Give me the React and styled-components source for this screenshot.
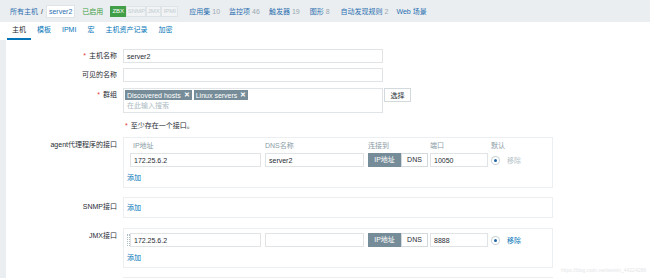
import React from 'react'
import styled, { createGlobalStyle } from 'styled-components'

const GlobalStyle = createGlobalStyle`
  html, body {
    margin: 0;
    padding: 0;
    background: #fff;
  }
  body {
    font-family: "Liberation Sans", Arial, "Noto Sans CJK SC", sans-serif;
    font-size: 7px;
    color: #1f2c33;
  }
  * { box-sizing: border-box; }
`

const Page = styled.div`
  position: relative;
  width: 650px;
  height: 278px;
  overflow: hidden;
`

// top header with breadcrumbs and host nav
const TopBar = styled.div`
  display: flex;
  align-items: center;
  height: 22px;
  padding-left: 10px;
  background: #ebeef0;
`
const Crumb = styled.span`
  color: #2a6fb0;
`
const Slash = styled.span`
  margin: 0 3px;
`
const CurrentCrumb = styled.span`
  color: #2a6fb0;
  background: #fff;
  border: 1px solid #dfe4e7;
  padding: 0 2px;
  line-height: 11px;
`
const Status = styled.span`
  color: #429e47;
  margin-left: 7px;
`
const Badges = styled.div`
  display: flex;
  margin-left: 7px;
`
const Badge = styled.span`
  width: ${p => p.$w}px;
  text-align: center;
  font-size: 6px;
  line-height: 9px;
  border: 1px solid ${p => (p.$on ? '#429e47' : '#dde3e6')};
  background: ${p => (p.$on ? '#429e47' : '#f1f3f4')};
  color: ${p => (p.$on ? '#fff' : '#c2ccd1')};
  overflow: hidden;
  white-space: nowrap;
`
const NavLink = styled.span`
  color: #2a6fb0;
  margin-left: ${p => p.$ml || 9}px;
`
const Count = styled.span`
  color: #9aa9b0;
  margin-left: 2px;
`

// tabs
const Tabs = styled.div`
  display: flex;
  gap: 1px;
  height: 18px;
  padding-left: 7px;
`
const Tab = styled.span`
  padding: 0 5px;
  line-height: 16px;
  border-bottom: 2px solid ${p => (p.$active ? '#0275b8' : 'transparent')};
  color: ${p => (p.$active ? '#1f2c33' : '#0275b8')};
`

// form
const Body = styled.div`
  display: flex;
`
const Strip = styled.div`
  width: 6px;
  flex-shrink: 0;
  background: #ebeef0;
  align-self: stretch;
`
const Form = styled.div`
  flex: 1;
  padding-top: 9px;
`
const Row = styled.div`
  display: flex;
  align-items: flex-start;
  margin-top: ${p => p.$mt || 0}px;
`
const Label = styled.div`
  width: 117px;
  flex-shrink: 0;
  padding-right: 6px;
  padding-top: ${p => p.$pt || 0}px;
  text-align: right;
  line-height: 14px;
`
const Req = styled.span`
  color: #e33734;
  margin-right: 3px;
`
const TextInput = styled.input`
  width: ${p => p.$w || 260}px;
  height: 14px;
  border: 1px solid #e0e4e6;
  padding: 0 3px;
  font: inherit;
  color: #1f2c33;
  outline: none;
  background: #fff;
`
const GroupRow = styled.div`
  display: flex;
  align-items: flex-start;
`
const MultiSelect = styled.div`
  width: 260px;
  height: 25px;
  border: 1px solid #e0e4e6;
  padding: 1px 1px 0;
`
const TagList = styled.div`
  display: flex;
  gap: 2px;
`
const Tag = styled.span`
  display: inline-flex;
  align-items: center;
  height: 10px;
  padding: 0 2px;
  background: #768d99;
  color: #fff;
`
const TagX = styled.span`
  margin-left: 3px;
  font-weight: bold;
`
const Placeholder = styled.div`
  color: #acbbc2;
  line-height: 10px;
  margin-top: 1px;
  padding-left: 2px;
`
const SelectButton = styled.button`
  margin-left: 1px;
  width: 27px;
  height: 14px;
  padding: 0;
  border: 1px solid #d3dadd;
  background: #fff;
  font: inherit;
  color: #1f2c33;
`
const Note = styled.div`
  line-height: 13px;
  padding-left: 2px;
`

// interface boxes
const IfaceBox = styled.div`
  width: 430px;
  border: 1px solid #eceff1;
  padding: 4px 3px 3px;
  min-height: ${p => p.$min || 0}px;
`
const IfaceHead = styled.div`
  display: flex;
  line-height: 8px;
  color: #8a9ca5;
  margin-bottom: 3px;
`
const IfaceLine = styled.div`
  display: flex;
  align-items: center;
  height: 14px;
`
const Cell = styled.div`
  width: ${p => p.$w}px;
  margin-left: ${p => p.$ml || 0}px;
  flex-shrink: 0;
  display: flex;
  align-items: center;
  padding-left: ${p => p.$pl || 0}px;
`
const Handle = styled.div`
  width: 3px;
  height: 12px;
  border-left: 1px dotted #aebcc3;
  border-right: 1px dotted #aebcc3;
`
const Toggle = styled.span`
  width: ${p => p.$w}px;
  height: 14px;
  line-height: 12px;
  text-align: center;
  border: 1px solid ${p => (p.$active ? '#768d99' : '#d3dadd')};
  background: ${p => (p.$active ? '#768d99' : '#fff')};
  color: ${p => (p.$active ? '#fff' : '#1f2c33')};
`
const Radio = styled.span`
  width: 7px;
  height: 7px;
  border-radius: 50%;
  background: #1f65a6;
  border: 2px solid #fff;
  box-shadow: 0 0 0 1px #c9d3d8;
`
const Remove = styled.span`
  margin-left: 8px;
  color: ${p => (p.$disabled ? '#b4c1c7' : '#0275b8')};
`
const AddLink = styled.div`
  color: #0275b8;
  line-height: 12px;
  margin-top: ${p => p.$mt || 0}px;
`
const Watermark = styled.div`
  position: absolute;
  right: 4px;
  bottom: 5px;
  font-size: 5px;
  color: #e4e6e8;
`

const COLS = [
  { w: 3 },
  { w: 131 },
  { w: 99, ml: 4 },
  { w: 60, ml: 4 },
  { w: 58, ml: 2 },
  { w: 50, ml: 3 },
]

function IfaceRow({ ip, dns, port, handle, removable }) {
  return (
    <IfaceLine>
      <Cell $w={COLS[0].w}>{handle && <Handle />}</Cell>
      <Cell $w={COLS[1].w}><TextInput $w={131} defaultValue={ip} readOnly /></Cell>
      <Cell $w={COLS[2].w} $ml={COLS[2].ml}><TextInput $w={99} defaultValue={dns} readOnly /></Cell>
      <Cell $w={COLS[3].w} $ml={COLS[3].ml}>
        <Toggle $w={33} $active>IP地址</Toggle>
        <Toggle $w={27}>DNS</Toggle>
      </Cell>
      <Cell $w={COLS[4].w} $ml={COLS[4].ml}><TextInput $w={58} defaultValue={port} readOnly /></Cell>
      <Cell $w={COLS[5].w} $ml={COLS[5].ml} $pl={1}>
        <Radio />
        <Remove $disabled={!removable}>移除</Remove>
      </Cell>
    </IfaceLine>
  )
}

export default function App() {
  return (
    <Page>
      <GlobalStyle />
      <TopBar>
        <Crumb>所有主机</Crumb>
        <Slash>/</Slash>
        <CurrentCrumb>server2</CurrentCrumb>
        <Status>已启用</Status>
        <Badges>
          <Badge $on $w={16}>ZBX</Badge>
          <Badge $w={20}>SNMP</Badge>
          <Badge $w={15}>JMX</Badge>
          <Badge $w={17}>IPMI</Badge>
        </Badges>
        <NavLink $ml={11}>应用集<Count>10</Count></NavLink>
        <NavLink>监控项<Count>46</Count></NavLink>
        <NavLink>触发器<Count>19</Count></NavLink>
        <NavLink $ml={10}>图形<Count>8</Count></NavLink>
        <NavLink $ml={11}>自动发现规则<Count>2</Count></NavLink>
        <NavLink $ml={8}>Web 场景</NavLink>
      </TopBar>

      <Tabs>
        <Tab $active>主机</Tab>
        <Tab>模板</Tab>
        <Tab>IPMI</Tab>
        <Tab>宏</Tab>
        <Tab>主机资产记录</Tab>
        <Tab>加密</Tab>
      </Tabs>

      <Body>
        <Strip />
        <Form>
          <Row>
            <Label><Req>*</Req>主机名称</Label>
            <TextInput defaultValue="server2" readOnly />
          </Row>
          <Row $mt={5}>
            <Label>可见的名称</Label>
            <TextInput defaultValue="" readOnly />
          </Row>
          <Row $mt={6}>
            <Label><Req>*</Req>群组</Label>
            <GroupRow>
              <MultiSelect>
                <TagList>
                  <Tag>Discovered hosts<TagX>✕</TagX></Tag>
                  <Tag>Linux servers<TagX>✕</TagX></Tag>
                </TagList>
                <Placeholder>在此输入搜索</Placeholder>
              </MultiSelect>
              <SelectButton>选择</SelectButton>
            </GroupRow>
          </Row>
          <Row $mt={6}>
            <Label />
            <Note><Req>*</Req>至少存在一个接口。</Note>
          </Row>

          <Row $mt={5}>
            <Label $pt={1}>agent代理程序的接口</Label>
            <IfaceBox>
              <IfaceHead>
                <Cell $w={COLS[0].w} />
                <Cell $w={COLS[1].w} $pl={3}>IP地址</Cell>
                <Cell $w={COLS[2].w} $ml={COLS[2].ml}>DNS名称</Cell>
                <Cell $w={COLS[3].w} $ml={COLS[3].ml}>连接到</Cell>
                <Cell $w={COLS[4].w} $ml={COLS[4].ml}>端口</Cell>
                <Cell $w={COLS[5].w} $ml={COLS[5].ml}>默认</Cell>
              </IfaceHead>
              <IfaceRow ip="172.25.6.2" dns="server2" port="10050" />
              <AddLink $mt={5}>添加</AddLink>
            </IfaceBox>
          </Row>

          <Row $mt={9}>
            <Label $pt={3}>SNMP接口</Label>
            <IfaceBox>
              <AddLink>添加</AddLink>
            </IfaceBox>
          </Row>

          <Row $mt={10}>
            <Label $pt={1}>JMX接口</Label>
            <IfaceBox>
              <IfaceRow ip="172.25.6.2" dns="" port="8888" handle removable />
              <AddLink $mt={5}>添加</AddLink>
            </IfaceBox>
          </Row>

          {/* next interface block, only its top edge is in view */}
          <Row $mt={9}>
            <Label />
            <IfaceBox $min={22} />
          </Row>
        </Form>
      </Body>

      <Watermark>https://blog.csdn.net/weixin_44224288</Watermark>
    </Page>
  )
}
